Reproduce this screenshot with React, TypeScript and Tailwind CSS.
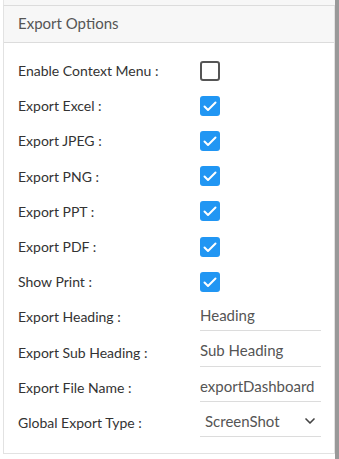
import { ChevronDown } from "lucide-react";

const checks = [
  { label: "Enable Context Menu :", checked: false },
  { label: "Export Excel :", checked: true },
  { label: "Export JPEG :", checked: true },
  { label: "Export PNG :", checked: true },
  { label: "Export PPT :", checked: true },
  { label: "Export PDF :", checked: true },
  { label: "Show Print :", checked: true },
];

const inputs = [
  { label: "Export Heading :", value: "Heading" },
  { label: "Export Sub Heading :", value: "Sub Heading" },
  { label: "Export File Name :", value: "exportDashboard" },
];

function Checkbox({ checked }: { checked: boolean }) {
  if (!checked) {
    return <div className="h-5 w-5 rounded-[3px] border-2 border-[#555]" />;
  }
  return (
    <div className="flex h-5 w-5 items-center justify-center rounded-[3px] bg-[#2196f3]">
      <svg viewBox="0 0 20 20" className="h-5 w-5" fill="none">
        <path d="M4.5 10.5l3.5 3.5 7.5-7.5" stroke="white" strokeWidth="2" strokeLinecap="round" strokeLinejoin="round" />
      </svg>
    </div>
  );
}

export default function App() {
  return (
    <div
      className="flex h-[459px] w-[339px] bg-white text-[14px] text-[#333]"
      style={{ fontFamily: "Lato, 'Noto Sans', sans-serif" }}
    >
      <div className="flex flex-1 flex-col pl-[3px]">
        <div className="h-[6px] border-b border-l border-[#dcdcdc] border-l-[#e5e5e5] bg-[#f7f7f7]" />
        <div className="flex flex-col border-b border-l border-r border-[#e2e2e2]">
          <div className="flex h-[37px] items-center border-b border-[#dcdcdc] bg-[#f7f7f7] pb-[2px] pl-[14px] text-[15px] text-[#555]">
            Export Options
          </div>
          <div className="flex flex-col pt-[10px] pb-[13px] pl-[14px]">
            {checks.map((c) => (
              <div key={c.label} className="flex h-[35.2px] items-center">
                <span className="w-[182px]">{c.label}</span>
                <Checkbox checked={c.checked} />
              </div>
            ))}
            {inputs.map((i) => (
              <div key={i.label} className="flex h-[35.2px] items-center">
                <span className="w-[182px]">{i.label}</span>
                <div className="flex h-[29px] w-[121px] items-center border-b border-[#dcdcdc] pb-[2px] text-[15px] text-[#555]">
                  {i.value}
                </div>
              </div>
            ))}
            <div className="flex h-[35.2px] items-center">
              <span className="w-[182px]">Global Export Type :</span>
              <div className="flex h-[29px] w-[121px] items-center justify-between border-b border-[#dcdcdc] pb-[2px] pl-[5px] pr-[3px] text-[15px] text-[#555]">
                <span>ScreenShot</span>
                <ChevronDown className="h-4 w-4 text-[#444]" strokeWidth={2.5} />
              </div>
            </div>
          </div>
        </div>
      </div>
      <div className="w-[4px] bg-[#999]" />
    </div>
  );
}
